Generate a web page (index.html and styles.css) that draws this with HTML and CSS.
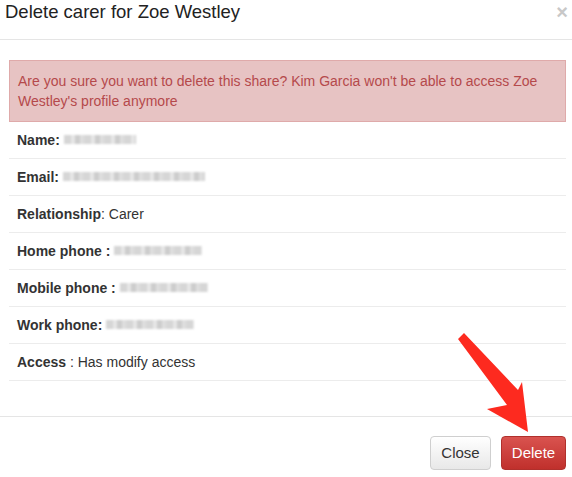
FILE: index.html
```html
<!DOCTYPE html>
<html>
<head>
<meta charset="utf-8">
<link rel="stylesheet" href="styles.css">
</head>
<body>
<div class="modal">
  <div class="modal-header">
    <h3 class="title">Delete carer for Zoe Westley</h3>
    <span class="close-x">×</span>
  </div>
  <div class="modal-body">
    <div class="alert">Are you sure you want to delete this share? Kim Garcia won't be able to access Zoe Westley's profile anymore</div>
    <table class="details">
      <tr><td><b>Name:</b> <span class="blur w72"></span></td></tr>
      <tr><td><b>Email:</b> <span class="blur w142"></span></td></tr>
      <tr><td><b>Relationship</b>: Carer</td></tr>
      <tr><td><b>Home phone :</b> <span class="blur w88"></span></td></tr>
      <tr><td><b>Mobile phone :</b> <span class="blur w88"></span></td></tr>
      <tr><td><b>Work phone:</b> <span class="blur w88"></span></td></tr>
      <tr><td><b>Access</b> : Has modify access</td></tr>
    </table>
  </div>
  <div class="modal-footer">
    <button class="btn btn-default">Close</button>
    <button class="btn btn-danger">Delete</button>
  </div>
</div>
<svg class="arrow" width="572" height="477" viewBox="0 0 572 477">
  <polygon points="458,339 464,333 518,390 522,382 528,432 487,409 507,405" fill="#fd2a1f"/>
</svg>
</body>
</html>
```
FILE: styles.css
```css
html, body {
  margin: 0;
  padding: 0;
  background: #fff;
}
body {
  font-family: "Liberation Sans", Arial, sans-serif;
  font-size: 14px;
  line-height: 20px;
  color: #333;
  overflow: hidden;
  height: 477px;
}
.modal {
  width: 572px;
}
.modal-header {
  height: 39px;
  border-bottom: 1px solid #e5e5e5;
  display: flex;
  justify-content: space-between;
  align-items: flex-start;
  padding: 0 4px 0 5px;
  box-sizing: content-box;
}
.title {
  margin: 0;
  padding-top: 1px;
  font-size: 18.5px;
  line-height: 22px;
  font-weight: normal;
  color: #222;
}
.close-x {
  font-size: 20px;
  line-height: 24px;
  font-weight: bold;
  color: #c8c8c8;
  padding-top: 0;
}
.modal-body {
  padding: 20px 6px 35px 9px;
}
.alert {
  background: #e7c3c3;
  border: 1px solid #dfaaaa;
  color: #b5494b;
  padding: 10px 8px;
  font-size: 14px;
  line-height: 20px;
}
.details {
  width: 100%;
  border-collapse: collapse;
  border-bottom: 1px solid #ececec;
}
.details td {
  padding: 8px 8px;
  line-height: 20px;
  border-top: 1px solid #ececec;
}
.details tr:first-child td {
  border-top: none;
}
.blur {
  display: inline-block;
  vertical-align: middle;
  height: 9px;
  margin-top: -3px;
  background: repeating-linear-gradient(90deg, #d6d6d6 0 7px, #e6e6e6 7px 11px, #cdcdcd 11px 16px, #dedede 16px 20px);
  filter: blur(1px);
}
.w72 { width: 72px; }
.w142 { width: 142px; }
.w88 { width: 88px; }
.modal-footer {
  border-top: 1px solid #e5e5e5;
  padding: 19px 6px 0 0;
  display: flex;
  justify-content: flex-end;
  gap: 10px;
}
.btn {
  font-family: "Liberation Sans", Arial, sans-serif;
  font-size: 15px;
  line-height: 20px;
  padding: 6px 0;
  border-radius: 4px;
  height: 34px;
  box-sizing: border-box;
  text-align: center;
}
.btn-default {
  width: 61px;
  color: #333;
  background: linear-gradient(#ffffff, #e8e8e8);
  border: 1px solid #cfcfcf;
}
.btn-danger {
  width: 65px;
  color: #fff;
  background: linear-gradient(#d9534f, #c0302c);
  border: 1px solid #b0302c;
}
.arrow {
  position: absolute;
  left: 0;
  top: 0;
  pointer-events: none;
}
```
